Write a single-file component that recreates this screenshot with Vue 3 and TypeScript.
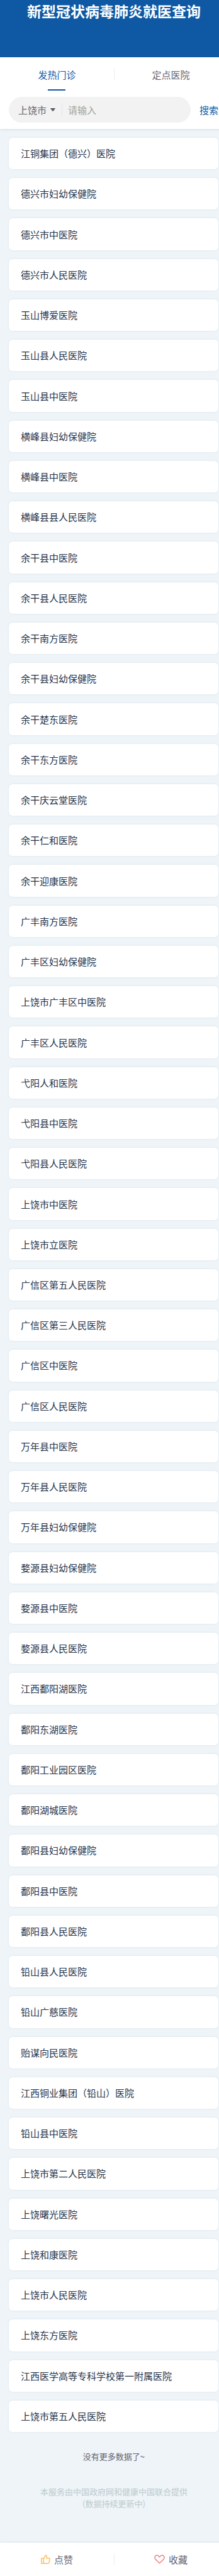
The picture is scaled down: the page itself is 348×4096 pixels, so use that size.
<script setup lang="ts">
import { ref } from 'vue'

type TabKey = 'fever' | 'designated'

const tabs: { key: TabKey; label: string }[] = [
  { key: 'fever', label: '发热门诊' },
  { key: 'designated', label: '定点医院' },
]
const activeTab = ref<TabKey>('fever')
const city = ref('上饶市')
const keyword = ref('')

const hospitals: string[] = [
  '江铜集团（德兴）医院',
  '德兴市妇幼保健院',
  '德兴市中医院',
  '德兴市人民医院',
  '玉山博爱医院',
  '玉山县人民医院',
  '玉山县中医院',
  '横峰县妇幼保健院',
  '横峰县中医院',
  '横峰县县人民医院',
  '余干县中医院',
  '余干县人民医院',
  '余干南方医院',
  '余干县妇幼保健院',
  '余干楚东医院',
  '余干东方医院',
  '余干庆云堂医院',
  '余干仁和医院',
  '余干迎康医院',
  '广丰南方医院',
  '广丰区妇幼保健院',
  '上饶市广丰区中医院',
  '广丰区人民医院',
  '弋阳人和医院',
  '弋阳县中医院',
  '弋阳县人民医院',
  '上饶市中医院',
  '上饶市立医院',
  '广信区第五人民医院',
  '广信区第三人民医院',
  '广信区中医院',
  '广信区人民医院',
  '万年县中医院',
  '万年县人民医院',
  '万年县妇幼保健院',
  '婺源县妇幼保健院',
  '婺源县中医院',
  '婺源县人民医院',
  '江西鄱阳湖医院',
  '鄱阳东湖医院',
  '鄱阳工业园区医院',
  '鄱阳湖城医院',
  '鄱阳县妇幼保健院',
  '鄱阳县中医院',
  '鄱阳县人民医院',
  '铅山县人民医院',
  '铅山广慈医院',
  '贻谋向民医院',
  '江西铜业集团（铅山）医院',
  '铅山县中医院',
  '上饶市第二人民医院',
  '上饶曙光医院',
  '上饶和康医院',
  '上饶市人民医院',
  '上饶东方医院',
  '江西医学高等专科学校第一附属医院',
  '上饶市第五人民医院',
]
</script>

<template>
  <div class="viewport">
    <div class="page">
      <header class="banner">
        <h1>新型冠状病毒肺炎就医查询</h1>
      </header>

      <section class="panel">
        <nav class="tabs">
          <button
            v-for="tab in tabs"
            :key="tab.key"
            type="button"
            class="tab"
            :class="{ active: activeTab === tab.key }"
            @click="activeTab = tab.key"
          >
            {{ tab.label }}
          </button>
        </nav>
        <form class="search" @submit.prevent>
          <div class="pill">
            <label class="city">
              <select v-model="city" aria-label="城市">
                <option>上饶市</option>
              </select>
              <svg class="caret" viewBox="0 0 8 5" aria-hidden="true">
                <path d="M0.6 0h6.8c.5 0 .7.5.4.8L4.5 4.7a.7.7 0 0 1-1 0L.2.8C-.1.5.1 0 .6 0z" />
              </svg>
            </label>
            <input v-model="keyword" type="text" placeholder="请输入" aria-label="医院名称" />
          </div>
          <button type="submit" class="submit">搜索</button>
        </form>
      </section>

      <ul class="list">
        <li v-for="name in hospitals" :key="name">
          <a href="#" class="card">{{ name }}</a>
        </li>
      </ul>

      <p class="end">没有更多数据了~</p>
      <p class="source">本服务由中国政府网和健康中国联合提供<br />(数据持续更新中)</p>

      <footer class="actions">
        <button type="button" class="action">
          <svg class="icon like" viewBox="0 0 20 20" aria-hidden="true">
            <path d="M1.2 7.6h4.6v11.2H1.2zM5.8 8.4c2-1.2 2.8-3.2 3-5.6.1-1 .8-1.6 1.7-1.5 1.6.2 2.1 1.7 2 3.2l-.4 3h5.2c1 0 1.6.8 1.4 1.7l-1.5 8c-.2.9-.8 1.5-1.7 1.5H5.8" />
          </svg>
          <span>点赞</span>
        </button>
        <button type="button" class="action">
          <svg class="icon heart" viewBox="0 0 23 20" aria-hidden="true">
            <path d="M11.5 18.4L2.8 9.8C.7 7.6.7 4.6 2.7 2.7c2-1.9 5-1.8 6.8.2l2 2.2 2-2.2c1.8-2 4.8-2.1 6.8-.2 2 1.9 2 4.9-.1 7.1z" />
          </svg>
          <span>收藏</span>
        </button>
      </footer>
    </div>
  </div>
</template>

<style>
html,
body {
  margin: 0;
  background: #eef4f7;
}
</style>

<style scoped>
.viewport {
  overflow: hidden;
  font-family: 'Noto Sans CJK SC', sans-serif;
  font-size: 15px;
  font-weight: 400;
  line-height: 20px;
  color: #626373;
}

/* The page is laid out slightly wider than the screen. */
.page {
  display: flex;
  flex-direction: column;
  width: 104%;
  min-height: 100vh;
}

button,
select,
input {
  margin: 0;
  padding: 0;
  border: 0;
  background: none;
  font: inherit;
  color: inherit;
  outline: none;
}

button {
  cursor: pointer;
}

.banner {
  height: 91px;
  background: #0f59a4;
}

h1 {
  margin: 0;
  padding-top: 1px;
  font-size: 23px;
  font-weight: 700;
  line-height: 32px;
  text-align: center;
  color: #fff;
}

.panel {
  background: #fff;
  box-shadow: 0 1px 4px rgba(40, 80, 100, 0.12);
}

.tabs,
.actions {
  display: grid;
  grid-template-columns: 1fr 1fr;
}

.tab {
  position: relative;
  height: 53px;
  padding-top: 2px;
}

.tab.active {
  color: #0f59a4;
}

.tab.active::after {
  content: '';
  position: absolute;
  bottom: 0;
  left: 50%;
  width: 28px;
  height: 2px;
  margin-left: -14px;
  background: #0f59a4;
}

.tab + .tab::before,
.action + .action::before {
  content: '';
  position: absolute;
  top: 18px;
  left: 0;
  width: 1px;
  height: 18px;
  background: #ececec;
}

.search {
  display: flex;
  align-items: center;
  gap: 14px;
  padding: 10px 15px 10px 14px;
}

.pill {
  display: flex;
  flex: 1;
  align-items: center;
  min-width: 0;
  height: 41px;
  padding-left: 15px;
  border-radius: 21px;
  background: #f2f2f2;
}

.city {
  display: flex;
  align-items: center;
  gap: 5px;
  padding-right: 10px;
  border-right: 1px solid #e4e4e4;
}

.city select {
  appearance: none;
}

.caret {
  width: 8px;
  height: 5px;
  fill: #5b5c6b;
}

.pill input {
  flex: 1;
  min-width: 0;
  padding: 0 9px;
}

.pill input::placeholder {
  color: #a3a397;
  opacity: 1;
}

.submit {
  color: #0f59a4;
}

.list {
  display: grid;
  flex: 1;
  grid-auto-rows: 1fr;
  gap: 14px;
  margin: 0;
  padding: 14px 15px 0 14px;
  list-style: none;
}

.list li {
  display: grid;
}

.card {
  display: flex;
  align-items: center;
  min-height: 50px;
  padding: 0 19px;
  border-radius: 6px;
  background: #fff;
  box-shadow: 0 0 3px rgba(40, 80, 100, 0.1);
  color: #25334a;
  text-decoration: none;
}

.end,
.source {
  margin: 0;
  font-size: 13px;
  line-height: 19px;
  text-align: center;
}

.end {
  padding-top: 29px;
}

.source {
  padding: 37px 0 53px;
  color: #bccacf;
}

.actions {
  background: #fff;
  box-shadow: 0 -1px 3px rgba(40, 80, 100, 0.08);
}

.action {
  position: relative;
  display: flex;
  align-items: center;
  justify-content: center;
  gap: 6px;
  height: 53px;
}

.icon {
  height: 15px;
  fill: none;
  stroke-width: 2;
  stroke-linejoin: round;
}

.like {
  width: 15px;
  stroke: #fdbf5e;
}

.heart {
  width: 17px;
  stroke: #ea8582;
}
</style>
